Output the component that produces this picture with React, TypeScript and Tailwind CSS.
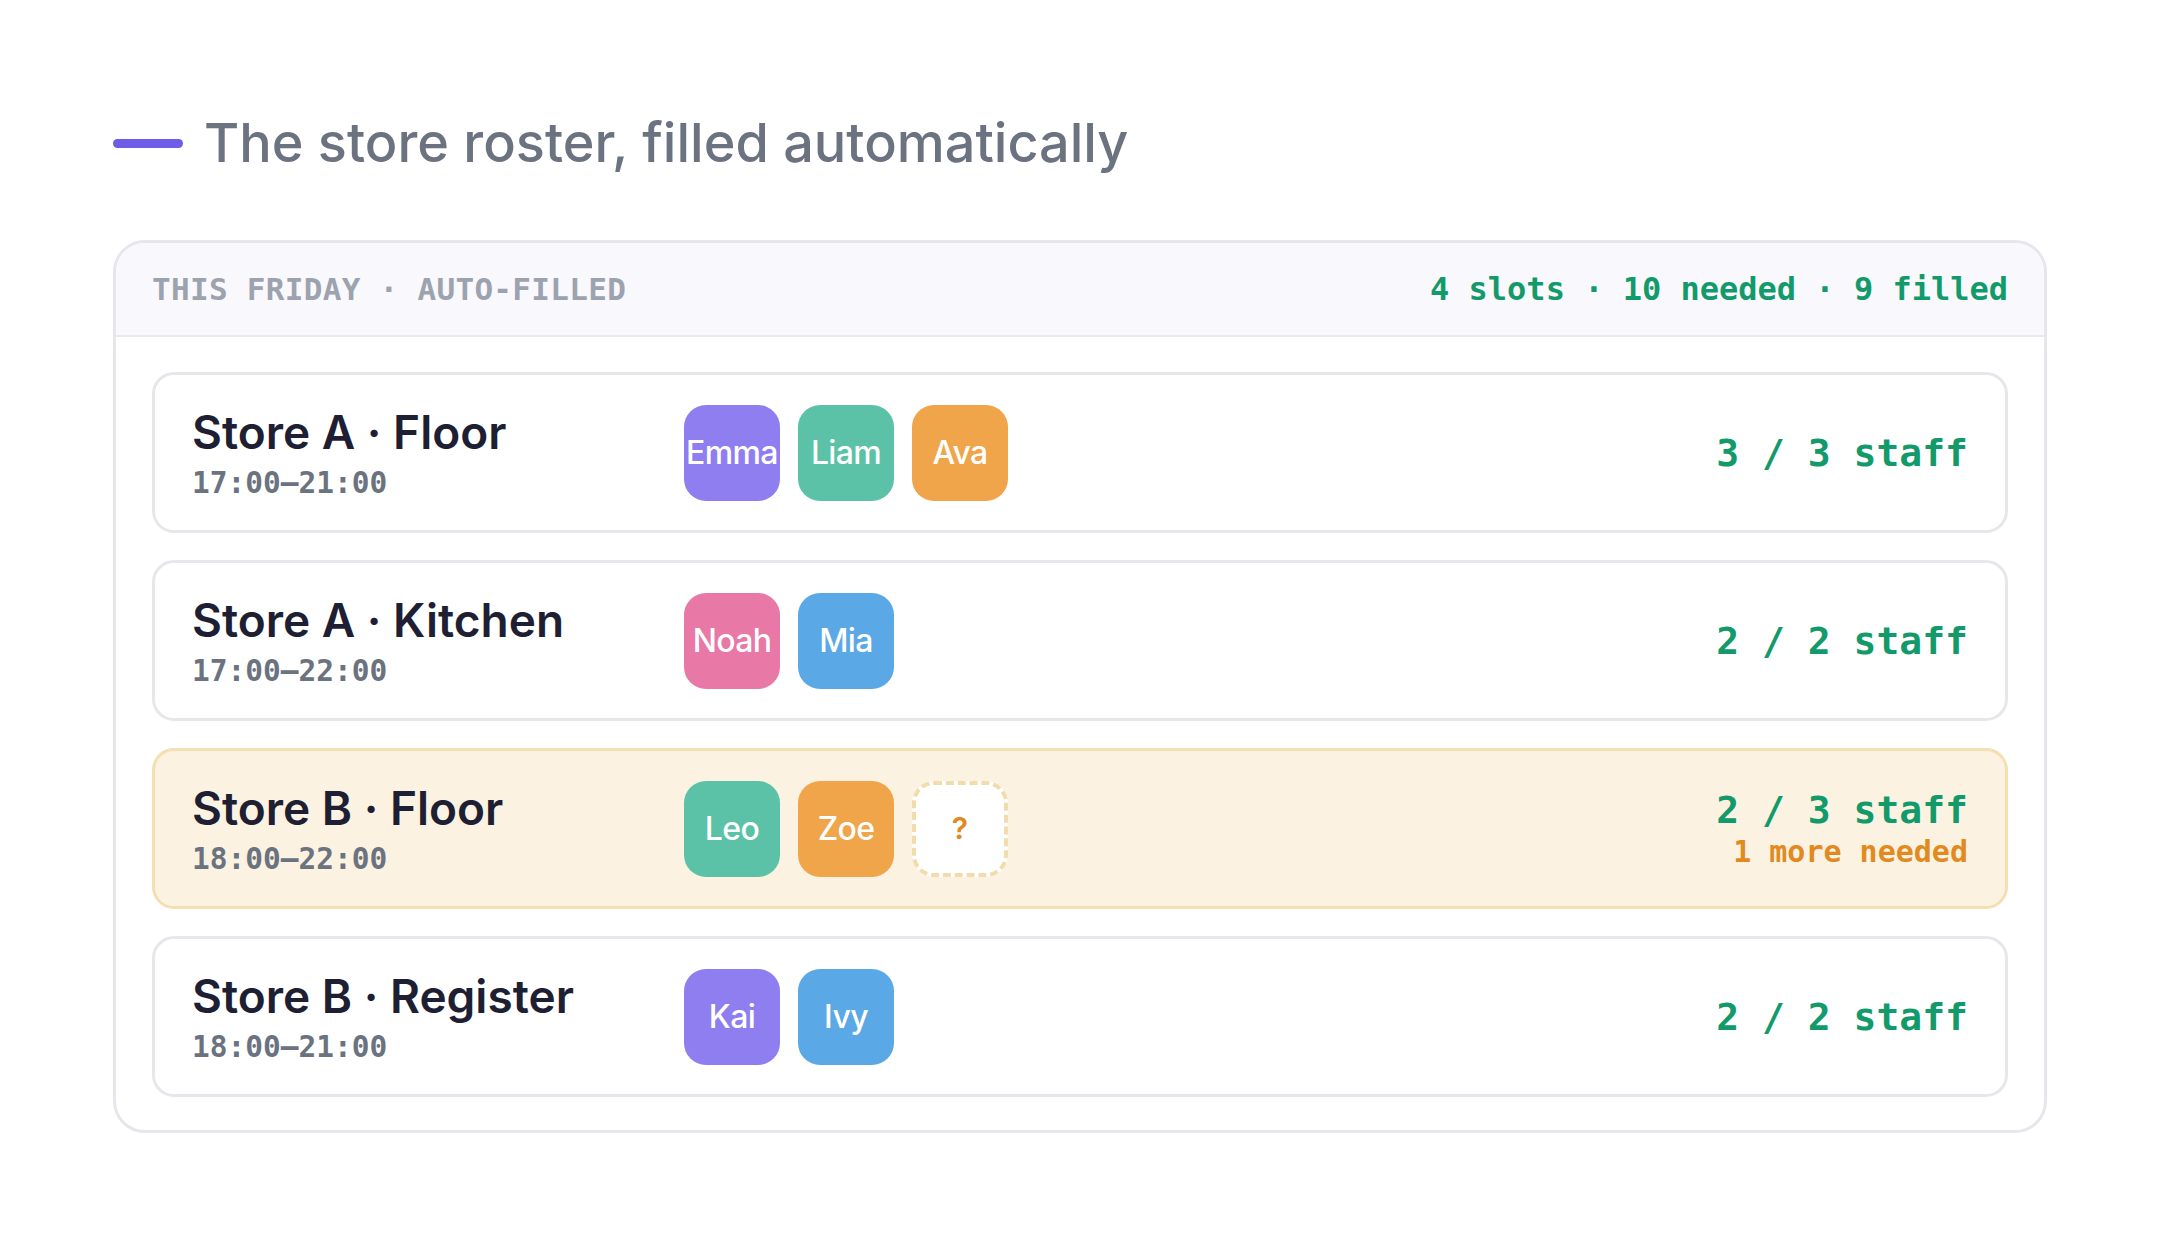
import { clsx } from "clsx";

type Staff = {
  name: string;
  color: string;
};

type Slot = {
  store: string;
  station: string;
  hours: string;
  needed: number;
  staff: Staff[];
};

const PURPLE = "bg-[#8f7ef0]";
const TEAL = "bg-[#5bc2a8]";
const ORANGE = "bg-[#f0a54a]";
const PINK = "bg-[#e878a6]";
const BLUE = "bg-[#5ba8e6]";

const slots: Slot[] = [
  {
    store: "Store A",
    station: "Floor",
    hours: "17:00–21:00",
    needed: 3,
    staff: [
      { name: "Emma", color: PURPLE },
      { name: "Liam", color: TEAL },
      { name: "Ava", color: ORANGE },
    ],
  },
  {
    store: "Store A",
    station: "Kitchen",
    hours: "17:00–22:00",
    needed: 2,
    staff: [
      { name: "Noah", color: PINK },
      { name: "Mia", color: BLUE },
    ],
  },
  {
    store: "Store B",
    station: "Floor",
    hours: "18:00–22:00",
    needed: 3,
    staff: [
      { name: "Leo", color: TEAL },
      { name: "Zoe", color: ORANGE },
    ],
  },
  {
    store: "Store B",
    station: "Register",
    hours: "18:00–21:00",
    needed: 2,
    staff: [
      { name: "Kai", color: PURPLE },
      { name: "Ivy", color: BLUE },
    ],
  },
];

const sans = "font-['Inter','Noto_Sans',sans-serif]";
const mono = "font-['DejaVu_Sans_Mono','Liberation_Mono',monospace]";

function SlotRow({ slot }: { readonly slot: Slot }) {
  const missing = slot.needed - slot.staff.length;
  const short = missing > 0;

  return (
    <div
      className={clsx(
        "flex h-[161px] items-center rounded-[22px] border-[3px] px-[37px]",
        short ? "border-[#f3dfb2] bg-[#fcf2e1]" : "border-[#e6e7eb] bg-white"
      )}
    >
      <div className="w-[492px] shrink-0">
        <div className={clsx(sans, "text-[46px] font-semibold leading-[52px] text-[#1e1f33]")}>
          {slot.store} · {slot.station}
        </div>
        <div className={clsx(mono, "mt-[8px] text-[29.5px] font-bold leading-[34px] text-[#6b7280]")}>
          {slot.hours}
        </div>
      </div>

      <div className="flex gap-[18px]">
        {slot.staff.map((person) => (
          <div
            key={person.name}
            className={clsx(
              sans,
              person.color,
              "flex h-[96px] w-[96px] items-center justify-center rounded-[22px] text-[32px] font-medium tracking-[-0.02em] text-white"
            )}
          >
            {person.name}
          </div>
        ))}
        {Array.from({ length: missing }).map((_, i) => (
          <div
            key={i}
            className={clsx(
              sans,
              "flex h-[96px] w-[96px] items-center justify-center rounded-[22px] border-[4px] border-dashed border-[#f2dcab] bg-white text-[30px] font-semibold text-[#e08a1f]"
            )}
          >
            ?
          </div>
        ))}
      </div>

      <div className={clsx(mono, "ml-auto text-right font-bold")}>
        <div className="text-[38px] leading-[42px] text-[#139a6b]">
          {slot.staff.length} / {slot.needed} staff
        </div>
        {short && (
          <div className="mt-[4px] text-[30px] leading-[34px] text-[#e08a1f]">
            {missing} more needed
          </div>
        )}
      </div>
    </div>
  );
}

export default function App() {
  const filled = slots.reduce((sum, s) => sum + s.staff.length, 0);
  const needed = slots.reduce((sum, s) => sum + s.needed, 0);

  return (
    <div className="min-h-screen bg-white pl-[113px] pt-[116px]">
      <div className="flex items-center gap-[21px]">
        <div className="h-[9px] w-[70px] rounded-full bg-[#6c5ce7]" />
        <h1 className={clsx(sans, "text-[54px] font-medium leading-[54px] text-[#6b7280]")}>
          The store roster, filled automatically
        </h1>
      </div>

      <div className="mt-[70px] w-[1934px] overflow-hidden rounded-[32px] border-[3px] border-[#e6e7eb] bg-white">
        <div className="flex h-[94px] items-center justify-between border-b-[2px] border-[#e9e9ef] bg-[#f8f8fd] px-[36px]">
          <span className={clsx(mono, "text-[31px] font-bold tracking-[0.3px] text-[#9ca3af]")}>
            THIS FRIDAY · AUTO-FILLED
          </span>
          <span className={clsx(mono, "text-[32px] font-bold text-[#139a6b]")}>
            {slots.length} slots · {needed} needed · {filled} filled
          </span>
        </div>

        <div className="flex flex-col gap-[27px] px-[36px] pb-[33px] pt-[35px]">
          {slots.map((slot) => (
            <SlotRow key={`${slot.store}-${slot.station}`} slot={slot} />
          ))}
        </div>
      </div>
    </div>
  );
}
